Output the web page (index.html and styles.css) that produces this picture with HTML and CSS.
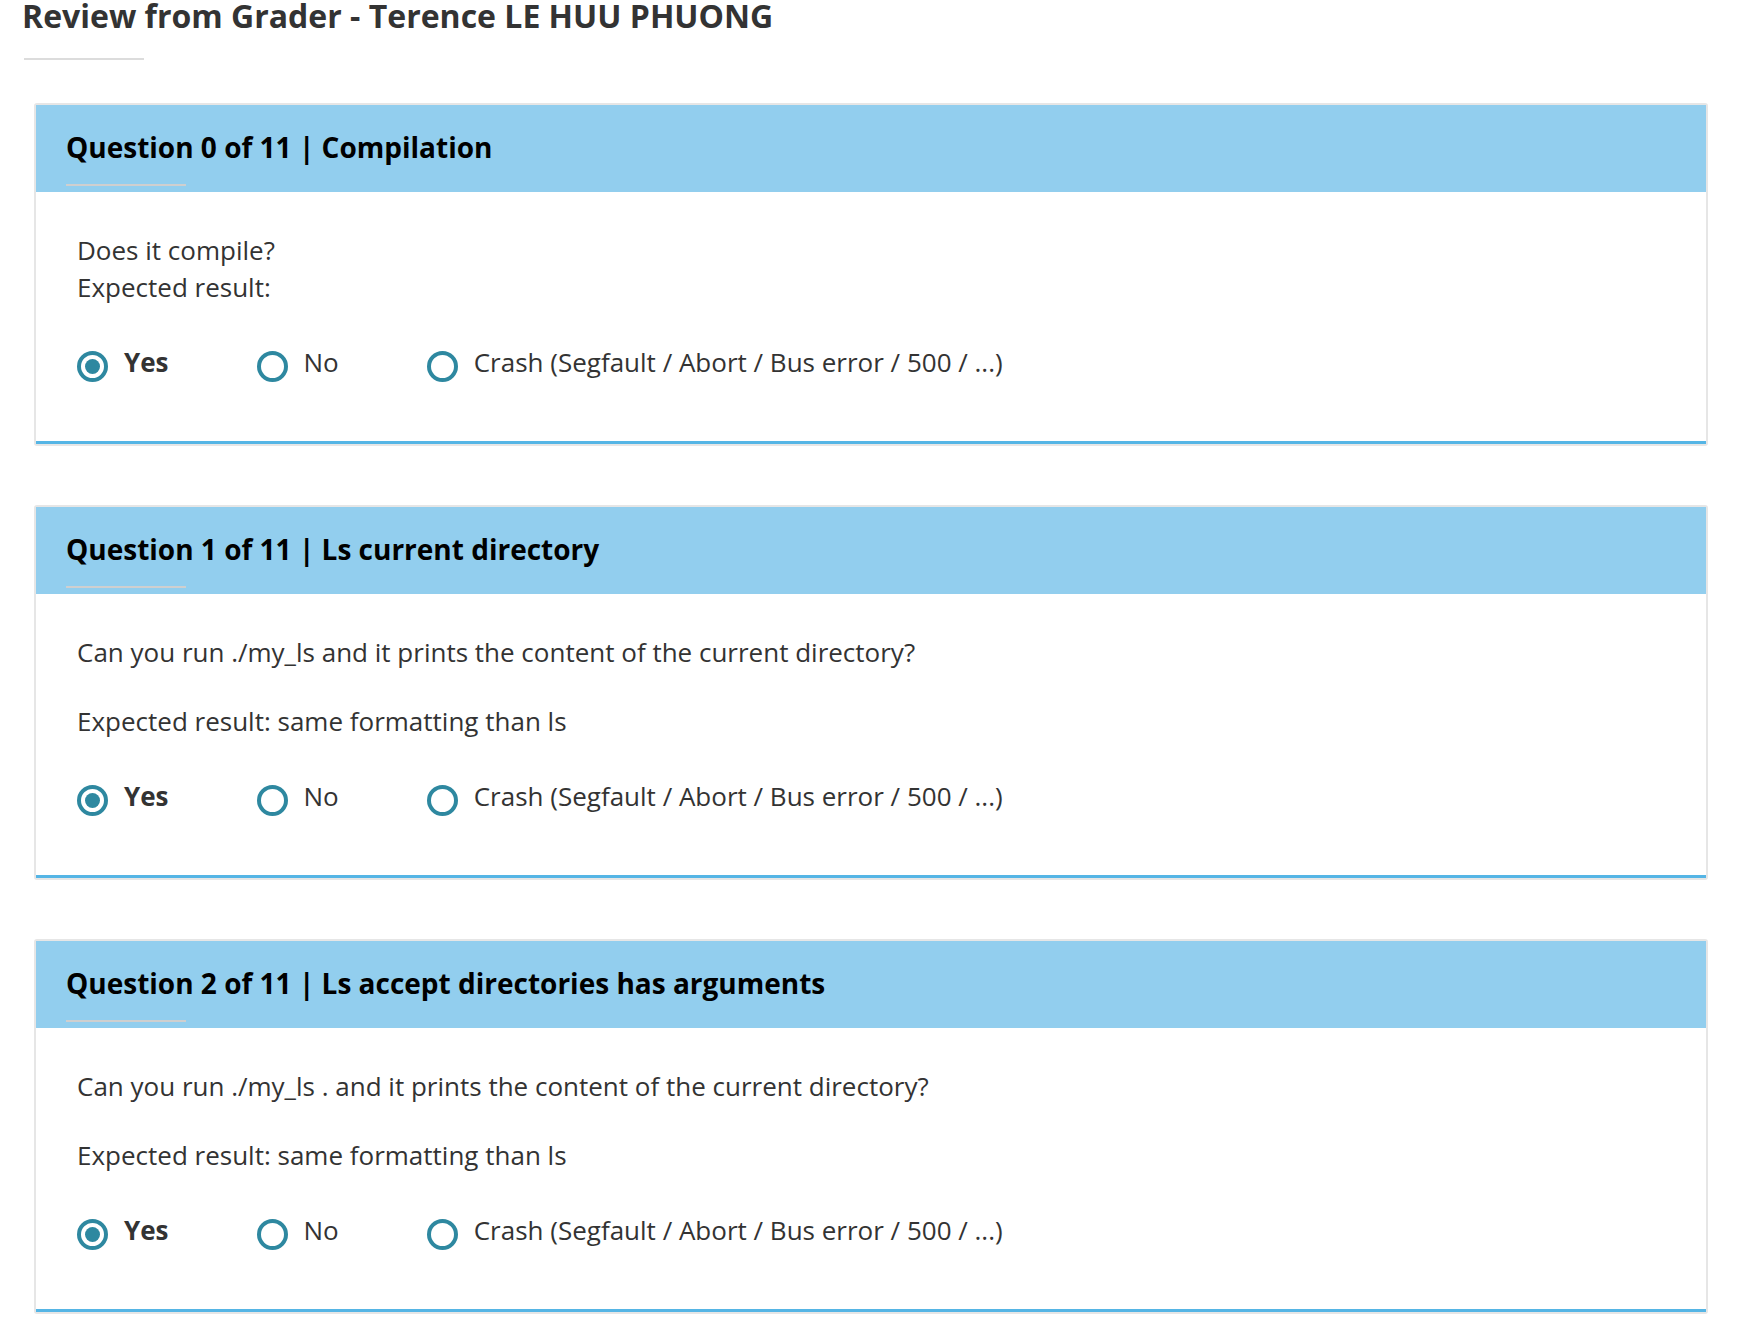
FILE: index.html
```html
<!DOCTYPE html>
<html lang="en">
<head>
<meta charset="utf-8">
<title>Review from Grader</title>
<link rel="stylesheet" href="styles.css">
</head>
<body>
<div class="page">
  <div class="page-head">
    <h1 class="page-title">Review from Grader - Terence LE HUU PHUONG</h1>
    <div class="page-rule"></div>
  </div>

  <section class="card">
    <div class="card-head">
      <h2 class="card-title">Question 0 of 11 | Compilation</h2>
      <div class="card-rule"></div>
    </div>
    <div class="card-body">
      <p class="desc">Does it compile?<br>Expected result:</p>
      <div class="options">
        <label class="option"><span class="radio checked"></span><span class="label bold">Yes</span></label>
        <label class="option"><span class="radio"></span><span class="label">No</span></label>
        <label class="option"><span class="radio"></span><span class="label">Crash (Segfault / Abort / Bus error / 500 / ...)</span></label>
      </div>
    </div>
  </section>

  <section class="card">
    <div class="card-head">
      <h2 class="card-title">Question 1 of 11 | Ls current directory</h2>
      <div class="card-rule"></div>
    </div>
    <div class="card-body">
      <p class="desc">Can you run ./my_ls and it prints the content of the current directory?</p>
      <p class="desc">Expected result: same formatting than ls</p>
      <div class="options">
        <label class="option"><span class="radio checked"></span><span class="label bold">Yes</span></label>
        <label class="option"><span class="radio"></span><span class="label">No</span></label>
        <label class="option"><span class="radio"></span><span class="label">Crash (Segfault / Abort / Bus error / 500 / ...)</span></label>
      </div>
    </div>
  </section>

  <section class="card">
    <div class="card-head">
      <h2 class="card-title">Question 2 of 11 | Ls accept directories has arguments</h2>
      <div class="card-rule"></div>
    </div>
    <div class="card-body">
      <p class="desc">Can you run ./my_ls . and it prints the content of the current directory?</p>
      <p class="desc">Expected result: same formatting than ls</p>
      <div class="options">
        <label class="option"><span class="radio checked"></span><span class="label bold">Yes</span></label>
        <label class="option"><span class="radio"></span><span class="label">No</span></label>
        <label class="option"><span class="radio"></span><span class="label">Crash (Segfault / Abort / Bus error / 500 / ...)</span></label>
      </div>
    </div>
  </section>
</div>
</body>
</html>
```
FILE: styles.css
```css
* { box-sizing: border-box; }

html, body {
  margin: 0;
  padding: 0;
  background: #ffffff;
}

body {
  font-family: "Open Sans", "Noto Sans", "Liberation Sans", sans-serif;
  color: #333333;
}

.page {
  padding: 0 30px 0 34px;
}

.page-head {
  margin-left: -12px;
  padding-top: 0;
}

.page-title {
  margin: 0;
  font-size: 32px;
  line-height: 32px;
  font-weight: 700;
  color: #333333;
}

.page-rule {
  width: 120px;
  height: 2px;
  margin: 26px 0 0 2px;
  background: #dcdcdc;
}

.card {
  margin-top: 43px;
  border: 2px solid #e6e6e6;
  border-radius: 3px;
  background: #ffffff;
}

.card + .card {
  margin-top: 59px;
}

.card-head {
  background: #92ceee;
  padding: 23px 30px 6px;
}

.card-title {
  margin: 0;
  font-size: 28px;
  line-height: 38px;
  font-weight: 700;
  color: #000000;
}

.card-rule {
  width: 120px;
  height: 2px;
  margin-top: 18px;
  background: #cfcfcf;
}

.card-body {
  padding: 40px 40px 59px 41px;
  border-bottom: 3px solid #55b5e5;
}

.desc {
  margin: 0 0 32px;
  font-size: 26px;
  line-height: 37px;
  color: #333333;
}

.desc:last-of-type {
  margin-bottom: 38px;
}

.options {
  display: flex;
  align-items: flex-start;
}

.option {
  display: flex;
  align-items: flex-start;
  margin-right: 88px;
  font-size: 26px;
  line-height: 37px;
}

.radio {
  flex: none;
  width: 31px;
  height: 31px;
  margin-top: 7px;
  border: 4px solid #2e88a0;
  border-radius: 50%;
  display: flex;
  align-items: center;
  justify-content: center;
}

.radio.checked::after {
  content: "";
  width: 15px;
  height: 15px;
  border-radius: 50%;
  background: #2e88a0;
}

.label {
  margin-left: 16px;
  color: #333333;
}

.label.bold {
  font-weight: 700;
}
```
